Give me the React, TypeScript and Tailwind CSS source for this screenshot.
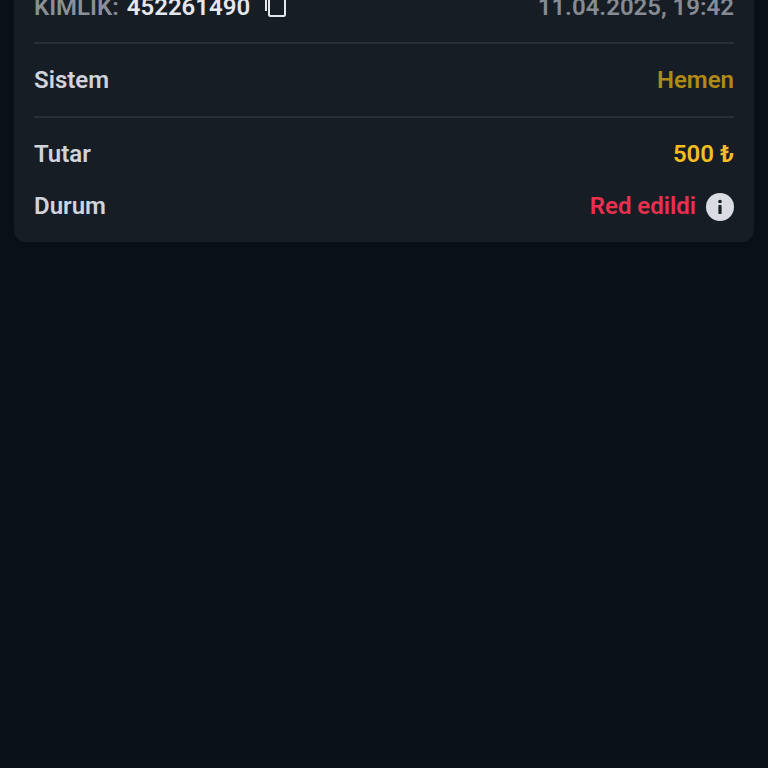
function CopyIcon() {
  return (
    <svg width="24" height="24" viewBox="0 0 24 24" fill="none" stroke="currentColor" strokeWidth="2" className="text-[#e4e7ec]">
      <rect x="7" y="1" width="16" height="20" rx="1.5" />
      <path d="M4 0V16" />
    </svg>
  );
}

function InfoIcon() {
  return (
    <svg width="28" height="28" viewBox="0 0 28 28">
      <circle cx="14" cy="14" r="14" fill="#d9dce3" />
      <circle cx="14" cy="8.5" r="1.8" fill="#171d24" />
      <rect x="12.4" y="12" width="3.2" height="9" rx="0.8" fill="#171d24" />
    </svg>
  );
}

export default function App() {
  return (
    <div className="h-[768px] w-[768px] overflow-hidden bg-[#091017] px-3.5 font-['Roboto',sans-serif] font-semibold text-[24px] leading-[28px]">
      <div className="-mt-[20px] rounded-b-xl bg-[#171d24] px-5 h-[262px] flex flex-col">
        {/* Top row, cut by the top of the screen */}
        <div className="flex items-center justify-between h-[52px] pt-[2px] shrink-0">
          <div className="flex items-center">
            <span className="text-[#8a8f98]">KIMLIK:</span>
            <span className="ml-2 text-[#e4e7ec]">452261490</span>
            <span className="ml-[12px]">
              <CopyIcon />
            </span>
          </div>
          <span className="text-[#868b94]">11.04.2025, 19:42</span>
        </div>
        <div className="h-0.5 bg-[#2a3038] mt-[10px] shrink-0" />
        <div className="flex items-center justify-between h-[72px] shrink-0">
          <span className="text-[#d0d3da]">Sistem</span>
          <span className="text-[#b08a14]">Hemen</span>
        </div>
        <div className="h-0.5 bg-[#2a3038] shrink-0" />
        <div className="flex items-center justify-between mt-[22px]">
          <span className="text-[#d0d3da]">Tutar</span>
          <span className="text-[#f4bd22]">500 ₺</span>
        </div>
        <div className="flex items-center justify-between mt-[25px]">
          <span className="-mt-0.5 text-[#d0d3da]">Durum</span>
          <div className="flex items-center gap-2.5">
            <span className="-mt-0.5 text-[#e8304f]">Red edildi</span>
            <InfoIcon />
          </div>
        </div>
      </div>
    </div>
  );
}
